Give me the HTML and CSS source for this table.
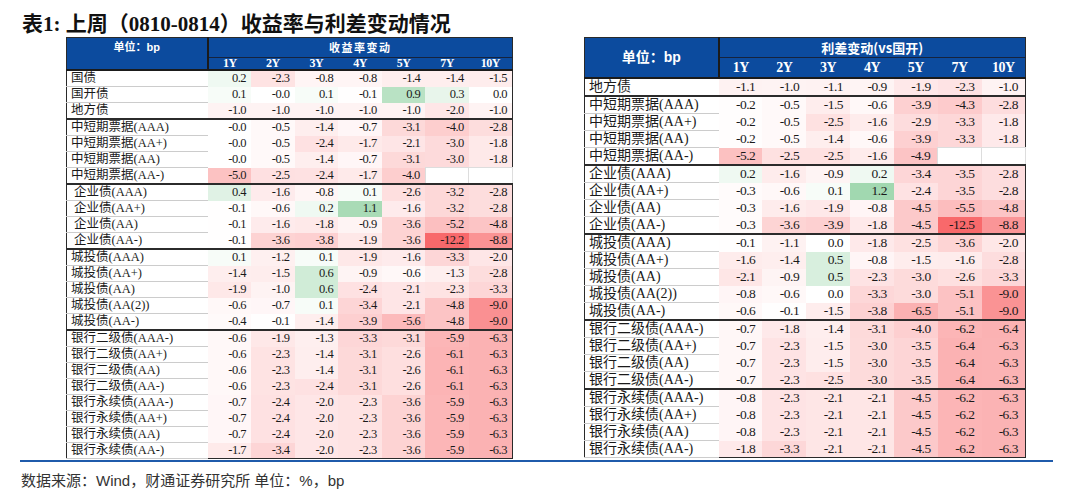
FILE: index.html
```html
<!DOCTYPE html>
<html lang="zh-CN">
<head>
<meta charset="utf-8">
<title>表1</title>
<link rel="stylesheet" href="styles.css">
</head>
<body>
<div class="page">
  <h1 class="title">表1: 上周（0810-0814）收益率与利差变动情况</h1>
  <div class="tables">
    <table class="tbl tbl-l" data-min="-12.2">
      <colgroup><col class="c-label"><col class="c-num"><col class="c-num"><col class="c-num"><col class="c-num"><col class="c-num"><col class="c-num"><col class="c-num"></colgroup>
      <thead>
        <tr class="h1"><th rowspan="2" class="unit">单位：bp</th><th colspan="7" class="grp">收益率变动</th></tr>
        <tr class="h2"><th>1Y</th><th>2Y</th><th>3Y</th><th>4Y</th><th>5Y</th><th>7Y</th><th>10Y</th></tr>
      </thead>
      <tbody>
        <tr><td class="lb">国债</td><td class="n">0.2</td><td class="n">-2.3</td><td class="n">-0.8</td><td class="n">-0.8</td><td class="n">-1.4</td><td class="n">-1.4</td><td class="n">-1.5</td></tr>
        <tr><td class="lb">国开债</td><td class="n">0.1</td><td class="n">-0.0</td><td class="n">0.1</td><td class="n">-0.1</td><td class="n">0.9</td><td class="n">0.3</td><td class="n">0.0</td></tr>
        <tr class="end"><td class="lb">地方债</td><td class="n">-1.0</td><td class="n">-1.0</td><td class="n">-1.0</td><td class="n">-1.0</td><td class="n">-1.0</td><td class="n">-2.0</td><td class="n">-1.0</td></tr>
        <tr><td class="lb">中短期票据(AAA)</td><td class="n">-0.0</td><td class="n">-0.5</td><td class="n">-1.4</td><td class="n">-0.7</td><td class="n">-3.1</td><td class="n">-4.0</td><td class="n">-2.8</td></tr>
        <tr><td class="lb">中短期票据(AA+)</td><td class="n">-0.0</td><td class="n">-0.5</td><td class="n">-2.4</td><td class="n">-1.7</td><td class="n">-2.1</td><td class="n">-3.0</td><td class="n">-1.8</td></tr>
        <tr><td class="lb">中短期票据(AA)</td><td class="n">-0.0</td><td class="n">-0.5</td><td class="n">-1.4</td><td class="n">-0.7</td><td class="n">-3.1</td><td class="n">-3.0</td><td class="n">-1.8</td></tr>
        <tr class="end"><td class="lb">中短期票据(AA-)</td><td class="n">-5.0</td><td class="n">-2.5</td><td class="n">-2.4</td><td class="n">-1.7</td><td class="n">-4.0</td><td class="n empty"></td><td class="n empty"></td></tr>
        <tr><td class="lb ind">企业债(AAA)</td><td class="n">0.4</td><td class="n">-1.6</td><td class="n">-0.8</td><td class="n">0.1</td><td class="n">-2.6</td><td class="n">-3.2</td><td class="n">-2.8</td></tr>
        <tr><td class="lb ind">企业债(AA+)</td><td class="n">-0.1</td><td class="n">-0.6</td><td class="n">0.2</td><td class="n">1.1</td><td class="n">-1.6</td><td class="n">-3.2</td><td class="n">-2.8</td></tr>
        <tr><td class="lb ind">企业债(AA)</td><td class="n">-0.1</td><td class="n">-1.6</td><td class="n">-1.8</td><td class="n">-0.9</td><td class="n">-3.6</td><td class="n">-5.2</td><td class="n">-4.8</td></tr>
        <tr class="end"><td class="lb ind">企业债(AA-)</td><td class="n">-0.1</td><td class="n">-3.6</td><td class="n">-3.8</td><td class="n">-1.9</td><td class="n">-3.6</td><td class="n">-12.2</td><td class="n">-8.8</td></tr>
        <tr><td class="lb">城投债(AAA)</td><td class="n">0.1</td><td class="n">-1.2</td><td class="n">0.1</td><td class="n">-1.9</td><td class="n">-1.6</td><td class="n">-3.3</td><td class="n">-2.0</td></tr>
        <tr><td class="lb">城投债(AA+)</td><td class="n">-1.4</td><td class="n">-1.5</td><td class="n">0.6</td><td class="n">-0.9</td><td class="n">-0.6</td><td class="n">-1.3</td><td class="n">-2.8</td></tr>
        <tr><td class="lb">城投债(AA)</td><td class="n">-1.9</td><td class="n">-1.0</td><td class="n">0.6</td><td class="n">-2.4</td><td class="n">-2.1</td><td class="n">-2.3</td><td class="n">-3.3</td></tr>
        <tr><td class="lb">城投债(AA(2))</td><td class="n">-0.6</td><td class="n">-0.7</td><td class="n">0.1</td><td class="n">-3.4</td><td class="n">-2.1</td><td class="n">-4.8</td><td class="n">-9.0</td></tr>
        <tr class="end"><td class="lb">城投债(AA-)</td><td class="n">-0.4</td><td class="n">-0.1</td><td class="n">-1.4</td><td class="n">-3.9</td><td class="n">-5.6</td><td class="n">-4.8</td><td class="n">-9.0</td></tr>
        <tr><td class="lb">银行二级债(AAA-)</td><td class="n">-0.6</td><td class="n">-1.9</td><td class="n">-1.3</td><td class="n">-3.3</td><td class="n">-3.1</td><td class="n">-5.9</td><td class="n">-6.3</td></tr>
        <tr><td class="lb">银行二级债(AA+)</td><td class="n">-0.6</td><td class="n">-2.3</td><td class="n">-1.4</td><td class="n">-3.1</td><td class="n">-2.6</td><td class="n">-6.1</td><td class="n">-6.3</td></tr>
        <tr><td class="lb">银行二级债(AA)</td><td class="n">-0.6</td><td class="n">-2.3</td><td class="n">-1.4</td><td class="n">-3.1</td><td class="n">-2.6</td><td class="n">-6.1</td><td class="n">-6.3</td></tr>
        <tr><td class="lb">银行二级债(AA-)</td><td class="n">-0.6</td><td class="n">-2.3</td><td class="n">-2.4</td><td class="n">-3.1</td><td class="n">-2.6</td><td class="n">-6.1</td><td class="n">-6.3</td></tr>
        <tr><td class="lb">银行永续债(AAA-)</td><td class="n">-0.7</td><td class="n">-2.4</td><td class="n">-2.0</td><td class="n">-2.3</td><td class="n">-3.6</td><td class="n">-5.9</td><td class="n">-6.3</td></tr>
        <tr><td class="lb">银行永续债(AA+)</td><td class="n">-0.7</td><td class="n">-2.4</td><td class="n">-2.0</td><td class="n">-2.3</td><td class="n">-3.6</td><td class="n">-5.9</td><td class="n">-6.3</td></tr>
        <tr><td class="lb">银行永续债(AA)</td><td class="n">-0.7</td><td class="n">-2.4</td><td class="n">-2.0</td><td class="n">-2.3</td><td class="n">-3.6</td><td class="n">-5.9</td><td class="n">-6.3</td></tr>
        <tr class="last"><td class="lb">银行永续债(AA-)</td><td class="n">-1.7</td><td class="n">-3.4</td><td class="n">-2.0</td><td class="n">-2.3</td><td class="n">-3.6</td><td class="n">-5.9</td><td class="n">-6.3</td></tr>
      </tbody>
    </table>

    <table class="tbl tbl-r" data-min="-12.5">
      <colgroup><col class="c-label"><col class="c-num"><col class="c-num"><col class="c-num"><col class="c-num"><col class="c-num"><col class="c-num"><col class="c-num"></colgroup>
      <thead>
        <tr class="h1"><th rowspan="2" class="unit">单位：bp</th><th colspan="7" class="grp">利差变动(vs国开)</th></tr>
        <tr class="h2"><th>1Y</th><th>2Y</th><th>3Y</th><th>4Y</th><th>5Y</th><th>7Y</th><th>10Y</th></tr>
      </thead>
      <tbody>
        <tr class="end"><td class="lb">地方债</td><td class="n">-1.1</td><td class="n">-1.0</td><td class="n">-1.1</td><td class="n">-0.9</td><td class="n">-1.9</td><td class="n">-2.3</td><td class="n">-1.0</td></tr>
        <tr><td class="lb">中短期票据(AAA)</td><td class="n">-0.2</td><td class="n">-0.5</td><td class="n">-1.5</td><td class="n">-0.6</td><td class="n">-3.9</td><td class="n">-4.3</td><td class="n">-2.8</td></tr>
        <tr><td class="lb">中短期票据(AA+)</td><td class="n">-0.2</td><td class="n">-0.5</td><td class="n">-2.5</td><td class="n">-1.6</td><td class="n">-2.9</td><td class="n">-3.3</td><td class="n">-1.8</td></tr>
        <tr><td class="lb">中短期票据(AA)</td><td class="n">-0.2</td><td class="n">-0.5</td><td class="n">-1.4</td><td class="n">-0.6</td><td class="n">-3.9</td><td class="n">-3.3</td><td class="n">-1.8</td></tr>
        <tr class="end"><td class="lb">中短期票据(AA-)</td><td class="n">-5.2</td><td class="n">-2.5</td><td class="n">-2.5</td><td class="n">-1.6</td><td class="n">-4.9</td><td class="n empty"></td><td class="n empty"></td></tr>
        <tr><td class="lb">企业债(AAA)</td><td class="n">0.2</td><td class="n">-1.6</td><td class="n">-0.9</td><td class="n">0.2</td><td class="n">-3.4</td><td class="n">-3.5</td><td class="n">-2.8</td></tr>
        <tr><td class="lb">企业债(AA+)</td><td class="n">-0.3</td><td class="n">-0.6</td><td class="n">0.1</td><td class="n">1.2</td><td class="n">-2.4</td><td class="n">-3.5</td><td class="n">-2.8</td></tr>
        <tr><td class="lb">企业债(AA)</td><td class="n">-0.3</td><td class="n">-1.6</td><td class="n">-1.9</td><td class="n">-0.8</td><td class="n">-4.5</td><td class="n">-5.5</td><td class="n">-4.8</td></tr>
        <tr class="end"><td class="lb">企业债(AA-)</td><td class="n">-0.3</td><td class="n">-3.6</td><td class="n">-3.9</td><td class="n">-1.8</td><td class="n">-4.5</td><td class="n">-12.5</td><td class="n">-8.8</td></tr>
        <tr><td class="lb">城投债(AAA)</td><td class="n">-0.1</td><td class="n">-1.1</td><td class="n">0.0</td><td class="n">-1.8</td><td class="n">-2.5</td><td class="n">-3.6</td><td class="n">-2.0</td></tr>
        <tr><td class="lb">城投债(AA+)</td><td class="n">-1.6</td><td class="n">-1.4</td><td class="n">0.5</td><td class="n">-0.8</td><td class="n">-1.5</td><td class="n">-1.6</td><td class="n">-2.8</td></tr>
        <tr><td class="lb">城投债(AA)</td><td class="n">-2.1</td><td class="n">-0.9</td><td class="n">0.5</td><td class="n">-2.3</td><td class="n">-3.0</td><td class="n">-2.6</td><td class="n">-3.3</td></tr>
        <tr><td class="lb">城投债(AA(2))</td><td class="n">-0.8</td><td class="n">-0.6</td><td class="n">0.0</td><td class="n">-3.3</td><td class="n">-3.0</td><td class="n">-5.1</td><td class="n">-9.0</td></tr>
        <tr class="end"><td class="lb">城投债(AA-)</td><td class="n">-0.6</td><td class="n">-0.1</td><td class="n">-1.5</td><td class="n">-3.8</td><td class="n">-6.5</td><td class="n">-5.1</td><td class="n">-9.0</td></tr>
        <tr><td class="lb">银行二级债(AAA-)</td><td class="n">-0.7</td><td class="n">-1.8</td><td class="n">-1.4</td><td class="n">-3.1</td><td class="n">-4.0</td><td class="n">-6.2</td><td class="n">-6.4</td></tr>
        <tr><td class="lb">银行二级债(AA+)</td><td class="n">-0.7</td><td class="n">-2.3</td><td class="n">-1.5</td><td class="n">-3.0</td><td class="n">-3.5</td><td class="n">-6.4</td><td class="n">-6.3</td></tr>
        <tr><td class="lb">银行二级债(AA)</td><td class="n">-0.7</td><td class="n">-2.3</td><td class="n">-1.5</td><td class="n">-3.0</td><td class="n">-3.5</td><td class="n">-6.4</td><td class="n">-6.3</td></tr>
        <tr class="end"><td class="lb">银行二级债(AA-)</td><td class="n">-0.7</td><td class="n">-2.3</td><td class="n">-2.5</td><td class="n">-3.0</td><td class="n">-3.5</td><td class="n">-6.4</td><td class="n">-6.3</td></tr>
        <tr><td class="lb">银行永续债(AAA-)</td><td class="n">-0.8</td><td class="n">-2.3</td><td class="n">-2.1</td><td class="n">-2.1</td><td class="n">-4.5</td><td class="n">-6.2</td><td class="n">-6.3</td></tr>
        <tr><td class="lb">银行永续债(AA+)</td><td class="n">-0.8</td><td class="n">-2.3</td><td class="n">-2.1</td><td class="n">-2.1</td><td class="n">-4.5</td><td class="n">-6.2</td><td class="n">-6.3</td></tr>
        <tr><td class="lb">银行永续债(AA)</td><td class="n">-0.8</td><td class="n">-2.3</td><td class="n">-2.1</td><td class="n">-2.1</td><td class="n">-4.5</td><td class="n">-6.2</td><td class="n">-6.3</td></tr>
        <tr class="last"><td class="lb">银行永续债(AA-)</td><td class="n">-1.8</td><td class="n">-3.3</td><td class="n">-2.1</td><td class="n">-2.1</td><td class="n">-4.5</td><td class="n">-6.2</td><td class="n">-6.3</td></tr>
      </tbody>
    </table>
  </div>
  <div class="rule"></div>
  <p class="source">数据来源：Wind，财通证券研究所 单位：%，bp</p>
</div>
<script src="script.js"></script>
</body>
</html>
```

FILE: styles.css
```css
html, body {
  margin: 0;
  padding: 0;
  background: #ffffff;
}

.page {
  width: 1080px;
  height: 492px;
  box-sizing: border-box;
  padding: 12px 0 0 20px;
  overflow: hidden;
}

.title {
  margin: 0;
  padding-left: 2px;
  height: 25px;
  line-height: 25px;
  font-family: "Liberation Serif", "Noto Sans CJK SC", serif;
  font-size: 21px;
  font-weight: 700;
  color: #111111;
  white-space: nowrap;
}

.tables {
  display: flex;
  align-items: flex-start;
  gap: 71px;
  padding-left: 46px;
}

.tbl {
  border-collapse: collapse;
  table-layout: fixed;
  background: #ffffff;
  border: 1px solid #2a2a2a;
}

.tbl-l { width: 447px; }
.tbl-l col.c-label { width: 141px; }
.tbl-r { width: 442px; }
.tbl-r col.c-label { width: 134px; }

.tbl th {
  background: #0c4b9e;
  color: #ffffff;
  font-weight: 700;
  padding: 0;
  text-align: center;
  white-space: nowrap;
}

.tbl th.unit {
  font-family: "Liberation Sans", "Noto Sans CJK SC", sans-serif;
  border-right: 2px solid #1b1b1b;
  border-bottom: 2px solid #1b1b1b;
}

.tbl th.grp {
  font-family: "Noto Sans CJK SC", sans-serif;
  border-bottom: 1px solid #16233d;
}

.tbl .h2 th {
  font-family: "Liberation Serif", serif;
  border-bottom: 2px solid #1b1b1b;
}

.tbl-l .h1 th { height: 19px; font-size: 11px; line-height: 19px; }
.tbl-l th.unit { vertical-align: top; }
.tbl-l th.grp { letter-spacing: 1.5px; }
.tbl-l .h2 th { height: 11px; font-size: 12px; line-height: 11px; letter-spacing: -0.5px; }

.tbl-r .h1 th { height: 19px; font-size: 13px; line-height: 19px; }
.tbl-r th.unit { font-size: 14px; vertical-align: middle; }
.tbl-r .h2 th { height: 19px; font-size: 14px; line-height: 19px; letter-spacing: -0.5px; }

.tbl td {
  padding: 0;
  white-space: nowrap;
  color: #1a1a1a;
}

.tbl td.lb {
  font-family: "Liberation Serif", "Noto Sans CJK SC", serif;
  padding-left: 4px;
  text-align: left;
  border-bottom: 1px solid #cccccc;
  background: #ffffff;
}

.tbl td.lb.ind { padding-left: 7px; }

.tbl td.n {
  font-family: "Liberation Serif", serif;
  text-align: right;
  letter-spacing: -0.5px;
}

.tbl td.empty {
  background: #ffffff;
  border: 1px solid #dddddd;
}

.tbl tr.end td {
  border-bottom: 2px solid #2b2b2b;
}

.tbl-l td { height: 15px; line-height: 15px; }
.tbl-l td.lb { font-size: 12.5px; }
.tbl-l td.n { font-size: 12.5px; padding-right: 5px; }

.tbl-r td { height: 16px; line-height: 16px; }
.tbl-r td.lb { font-size: 14px; }
.tbl-r td.n { font-size: 13.5px; padding-right: 7px; }

.rule {
  width: 1033px;
  height: 2px;
  margin-top: 1px;
  background: #1f5bab;
}

.source {
  margin: 9px 0 0 0;
  padding-left: 1px;
  font-family: "Liberation Sans", "Noto Sans CJK SC", sans-serif;
  font-size: 15px;
  line-height: 20px;
  color: #333333;
  white-space: nowrap;
}
```

FILE: script.js
```js
(function () {
  var tables = document.querySelectorAll('table[data-min]');
  tables.forEach(function (t) {
    var min = parseFloat(t.getAttribute('data-min'));
    var cells = t.querySelectorAll('td.n');
    cells.forEach(function (td) {
      var s = td.textContent.trim();
      if (!s) return;
      var v = parseFloat(s);
      var r, g, b, k;
      if (v < 0) {
        k = Math.min(1, v / min);
        r = 255 + (248 - 255) * k;
        g = 255 + (105 - 255) * k;
        b = 255 + (107 - 255) * k;
      } else {
        k = Math.min(1, v / 2);
        r = 255 + (99 - 255) * k;
        g = 255 + (190 - 255) * k;
        b = 255 + (123 - 255) * k;
      }
      td.style.backgroundColor = 'rgb(' + Math.round(r) + ',' + Math.round(g) + ',' + Math.round(b) + ')';
    });
  });
})();
```
